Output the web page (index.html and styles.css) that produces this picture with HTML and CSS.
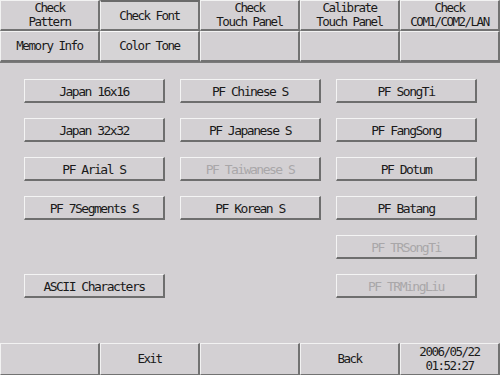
FILE: index.html
```html
<!DOCTYPE html>
<html>
<head>
<meta charset="utf-8">
<link rel="stylesheet" href="styles.css">
</head>
<body>
<div class="screen">
  <div class="tabs">
    <div class="tab"><span>Check<br>Pattern</span></div>
    <div class="tab tab-on"><span>Check Font</span></div>
    <div class="tab"><span>Check<br>Touch Panel</span></div>
    <div class="tab"><span>Calibrate<br>Touch Panel</span></div>
    <div class="tab"><span>Check<br>COM1/COM2/LAN</span></div>
    <div class="tab"><span>Memory Info</span></div>
    <div class="tab tab-sel"><span>Color Tone</span></div>
    <div class="tab"></div>
    <div class="tab"></div>
    <div class="tab"></div>
  </div>
  <div class="content">
    <div class="btn">Japan 16x16</div>
    <div class="btn">PF Chinese S</div>
    <div class="btn">PF SongTi</div>
    <div class="btn">Japan 32x32</div>
    <div class="btn">PF Japanese S</div>
    <div class="btn">PF FangSong</div>
    <div class="btn">PF Arial S</div>
    <div class="btn dis">PF Taiwanese S</div>
    <div class="btn">PF Dotum</div>
    <div class="btn">PF 7Segments S</div>
    <div class="btn">PF Korean S</div>
    <div class="btn">PF Batang</div>
    <div class="btn dis c3">PF TRSongTi</div>
    <div class="btn c1">ASCII Characters</div>
    <div class="btn dis c3">PF TRMingLiu</div>
  </div>
  <div class="footer">
    <div class="tab"></div>
    <div class="tab"><span>Exit</span></div>
    <div class="tab"></div>
    <div class="tab"><span>Back</span></div>
    <div class="tab"><span>2006/05/22<br>01:52:27</span></div>
  </div>
</div>
</body>
</html>
```
FILE: styles.css
```css
html, body {
  margin: 0;
  padding: 0;
  background: #d3d0d3;
}
.screen {
  width: 500px;
  height: 375px;
  display: flex;
  flex-direction: column;
  font-family: "DejaVu Sans Mono", "Liberation Mono", monospace;
  font-size: 13px;
  letter-spacing: -1.5px;
  color: #1a1a1a;
}
.tabs {
  display: grid;
  grid-template-columns: repeat(5, 100px);
  grid-template-rows: 31px 31px;
  border-bottom: 1px solid #7a7a7a;
}
.tab {
  box-sizing: border-box;
  border-top: 1px solid #f2f2f2;
  border-left: 1px solid #f2f2f2;
  border-right: 2px solid #727272;
  border-bottom: 2px solid #727272;
  display: flex;
  align-items: center;
  justify-content: center;
  text-align: center;
  line-height: 14px;
  font-size: 12.5px;
  background: #d3d0d3;
}
.tab-on {
  border-top: 2px solid #6a6a6a;
  background: #d6d4d6;
}
.tab-sel {
  background: #d6d4d6;
  border-top: 1px solid #fafafa;
}
.content {
  flex: 1;
  display: grid;
  grid-template-columns: repeat(3, 141px);
  grid-template-rows: repeat(6, 24px);
  column-gap: 15px;
  row-gap: 15px;
  padding: 16px 0 0 24px;
  align-content: start;
}
.btn {
  box-sizing: border-box;
  border-top: 1px solid #f4f4f4;
  border-left: 1px solid #f4f4f4;
  border-right: 2px solid #6e6e6e;
  border-bottom: 2px solid #6e6e6e;
  display: flex;
  align-items: center;
  justify-content: center;
  padding-top: 1px;
}
.dis {
  color: #a9a7a9;
}
.c1 { grid-column: 1; }
.c3 { grid-column: 3; }
.footer {
  display: grid;
  grid-template-columns: repeat(5, 100px);
  height: 32px;
}
.footer .tab {
  border-bottom: 1px solid #727272;
}
```
